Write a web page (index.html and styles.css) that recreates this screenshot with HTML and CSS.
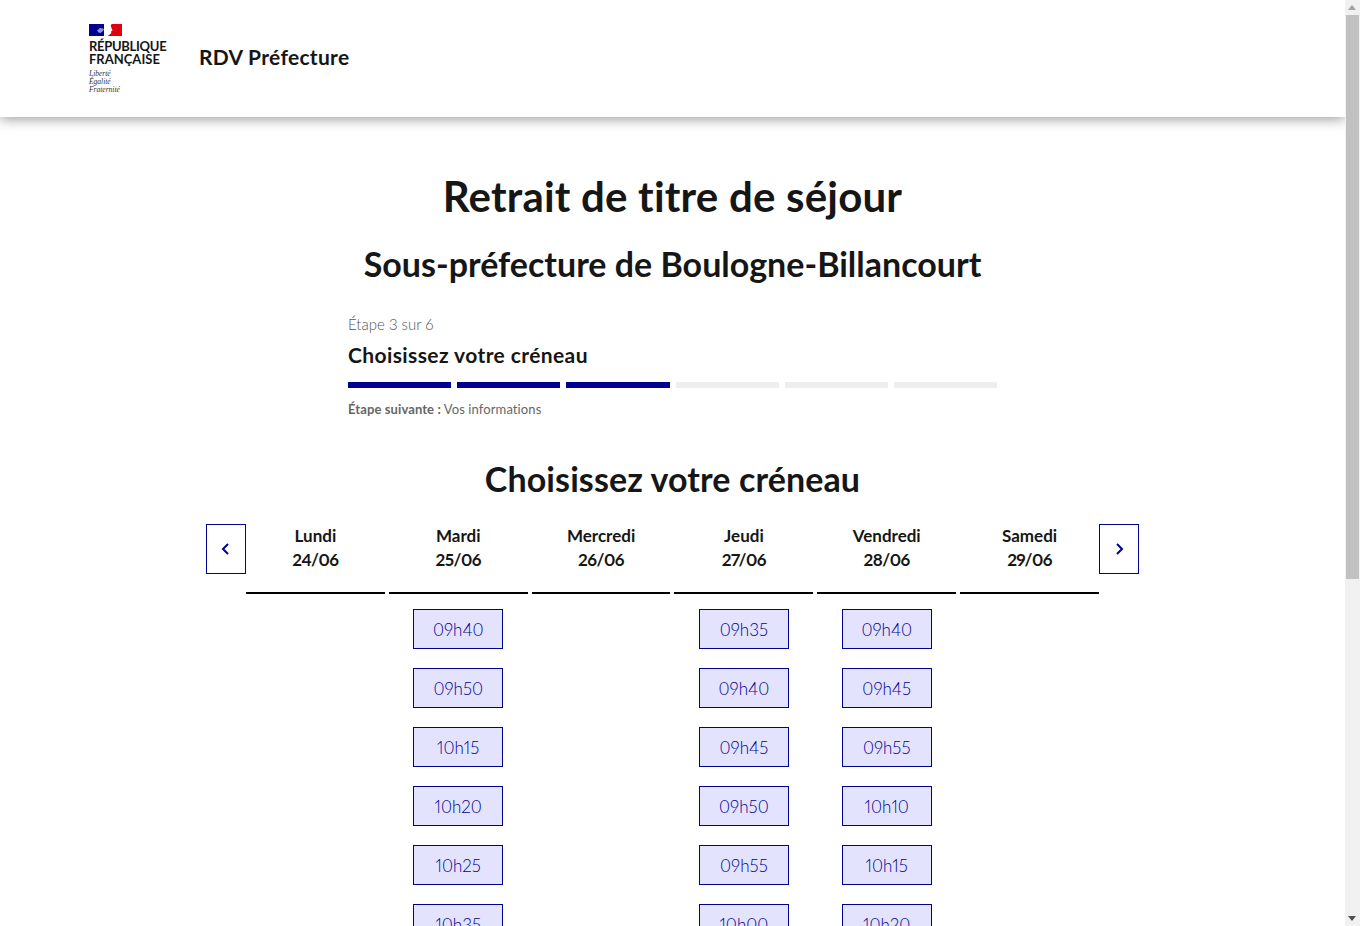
FILE: index.html
```html
<!DOCTYPE html>
<html lang="fr">
<head>
    <meta charset="UTF-8">
    <meta name="viewport" content="width=device-width, initial-scale=1.0">
    <title>RDV Préfecture</title>
    <link rel="stylesheet" href="styles.css">
</head>
<body>
    <div class="page">
        <header class="site-header">
            <div class="logo">
                <svg class="flag" width="33" height="12" viewBox="0 0 33 12">
                    <rect width="33" height="12" fill="#fff"/>
                    <rect width="15" height="12" fill="#000091"/>
                    <path d="M33 0H22.500l-.8 2 .8 2 1 2.500-1.500 1 .3 1.500-1.500 1.500-2 1.500h14.200z" fill="#e1000f"/>
                    <path d="M8 6.500l3-2.500 3 .5 1 1-1.500 2-2 1.500-2-.5z" fill="#8f92cc"/>
                    <path d="M15 0h2v8l-2 4z" fill="#fff"/>
                </svg>
                <p class="logo-name"><span class="tight">RÉPUBLIQUE</span><br>FRANÇAISE</p>
                <p class="logo-motto">Liberté<br>Égalité<br>Fraternité</p>
            </div>
            <span class="site-name">RDV Préfecture</span>
        </header>

        <main class="content">
            <h1>Retrait de titre de séjour</h1>
            <h2>Sous-préfecture de Boulogne-Billancourt</h2>

            <div class="stepper">
                <p class="step-count">Étape 3 sur 6</p>
                <p class="step-title">Choisissez votre créneau</p>
                <div class="step-bars">
                    <span class="done"></span>
                    <span class="done"></span>
                    <span class="done"></span>
                    <span></span>
                    <span></span>
                    <span></span>
                </div>
                <p class="step-next"><b>Étape suivante :</b> Vos informations</p>
            </div>

            <h3>Choisissez votre créneau</h3>

            <div class="calendar">
                <button class="nav-btn" aria-label="Précédent">
                    <svg width="16" height="16" viewBox="0 0 16 16"><path d="M10 3 5 8l5 5" fill="none" stroke="#000091" stroke-width="2"/></svg>
                </button>
                <div class="days">
                    <div class="day">
                        <div class="day-head">Lundi<br><span class="date">24/06</span></div>
                    </div>
                    <div class="day">
                        <div class="day-head">Mardi<br><span class="date">25/06</span></div>
                        <a class="slot">09h40</a>
                        <a class="slot">09h50</a>
                        <a class="slot">10h15</a>
                        <a class="slot">10h20</a>
                        <a class="slot">10h25</a>
                        <a class="slot">10h35</a>
                    </div>
                    <div class="day">
                        <div class="day-head">Mercredi<br><span class="date">26/06</span></div>
                    </div>
                    <div class="day">
                        <div class="day-head">Jeudi<br><span class="date">27/06</span></div>
                        <a class="slot">09h35</a>
                        <a class="slot">09h40</a>
                        <a class="slot">09h45</a>
                        <a class="slot">09h50</a>
                        <a class="slot">09h55</a>
                        <a class="slot">10h00</a>
                    </div>
                    <div class="day">
                        <div class="day-head">Vendredi<br><span class="date">28/06</span></div>
                        <a class="slot">09h40</a>
                        <a class="slot">09h45</a>
                        <a class="slot">09h55</a>
                        <a class="slot">10h10</a>
                        <a class="slot">10h15</a>
                        <a class="slot">10h20</a>
                    </div>
                    <div class="day">
                        <div class="day-head">Samedi<br><span class="date">29/06</span></div>
                    </div>
                </div>
                <button class="nav-btn" aria-label="Suivant">
                    <svg width="16" height="16" viewBox="0 0 16 16"><path d="M6 3l5 5-5 5" fill="none" stroke="#000091" stroke-width="2"/></svg>
                </button>
            </div>
        </main>
    </div>

    <!-- scrollbar as it shows in the window -->
    <div class="scrollbar">
        <span class="arrow-up"></span>
        <span class="thumb"></span>
        <span class="arrow-down"></span>
    </div>
</body>
</html>
```

FILE: styles.css
```css
html, body {
    height: 100%;
}
body {
    font-family: "Lato", "Liberation Sans", sans-serif;
    font-feature-settings: "pnum";
    color: #161616;
    background: #fff;
    margin: 0;
    display: flex;
    overflow: hidden;
}
.page {
    flex: 1;
    min-width: 0;
}
.site-header {
    height: 117px;
    box-sizing: border-box;
    padding: 24px 0 0 89px;
    display: flex;
    align-items: flex-start;
    background: #fff;
    box-shadow: 0 2px 12px rgba(0, 0, 0, 0.4);
    position: relative;
}
.logo {
    width: 110px;
}
.flag {
    display: block;
}
.logo-name {
    margin: 4px 0 0;
    font-size: 13px;
    line-height: 13px;
    font-weight: 700;
    white-space: nowrap;
}
.tight {
    letter-spacing: -0.3px;
}
.logo-motto {
    margin: 4px 0 0;
    font-family: "Liberation Serif", serif;
    font-style: italic;
    font-size: 7.500px;
    line-height: 8px;
    color: #333;
}
.site-name {
    font-size: 21px;
    font-weight: 700;
    line-height: 28px;
    letter-spacing: 0.3px;
    margin-top: 19px;
}
.content {
    text-align: center;
}
h1 {
    font-size: 42px;
    line-height: 48px;
    font-weight: 700;
    letter-spacing: 0.2px;
    margin: 0;
    padding-top: 55px;
}
h2 {
    font-size: 34px;
    line-height: 40px;
    font-weight: 700;
    margin: 24px 0 0;
}
.stepper {
    width: 649px;
    margin: 28px auto 0;
    text-align: left;
}
.stepper p {
    margin: 0;
}
.step-count {
    font-size: 15px;
    line-height: 24px;
    font-weight: 300;
    color: #555;
}
.step-title {
    font-size: 21px;
    font-weight: 700;
    line-height: 28px;
    letter-spacing: 0.4px;
    margin-top: 5px !important;
}
.step-bars {
    display: flex;
    gap: 6px;
    margin-top: 13px;
}
.step-bars span {
    flex: 1;
    height: 6px;
    background: #eee;
}
.step-bars .done {
    background: #000091;
}
.step-next {
    font-size: 13px;
    line-height: 20px;
    letter-spacing: 0.1px;
    color: #666;
    margin-top: 11px !important;
}
h3 {
    font-size: 34px;
    line-height: 40px;
    font-weight: 700;
    letter-spacing: 0.1px;
    margin: 40px 0 0;
}
.calendar {
    width: 933px;
    margin: 25px auto 0;
    display: flex;
    align-items: flex-start;
}
.nav-btn {
    width: 40px;
    height: 50px;
    flex: none;
    padding: 0;
    border: 1px solid #000091;
    background: #fff;
    display: flex;
    align-items: center;
    justify-content: center;
}
.days {
    flex: 1;
    display: grid;
    grid-template-columns: repeat(6, 1fr);
    gap: 4px;
}
.day {
    display: flex;
    flex-direction: column;
    align-items: center;
}
.day-head {
    width: 100%;
    height: 70px;
    box-sizing: border-box;
    border-bottom: 2px solid #000;
    text-align: center;
    font-size: 17px;
    font-weight: 700;
    line-height: 24px;
    margin-bottom: 15px;
}
.date {
    letter-spacing: -0.5px;
}
.slot {
    width: 90px;
    height: 40px;
    box-sizing: border-box;
    flex: none;
    border: 1px solid #000091;
    background: #e3e3fd;
    color: #000091;
    font-size: 17px;
    font-weight: 300;
    line-height: 40px;
    text-align: center;
    margin-bottom: 19px;
}
.scrollbar {
    width: 15px;
    flex: none;
    background: #f1f1f1;
    display: flex;
    flex-direction: column;
    align-items: center;
    position: relative;
}
.thumb {
    width: 13px;
    height: 564px;
    margin-top: 15px;
    background: #c1c1c1;
}
.arrow-up, .arrow-down {
    position: absolute;
    left: 3px;
    border-left: 4.500px solid transparent;
    border-right: 4.500px solid transparent;
}
.arrow-up {
    top: 5px;
    border-bottom: 5px solid #a3a3a3;
}
.arrow-down {
    bottom: 5px;
    border-top: 5px solid #505050;
}
```
